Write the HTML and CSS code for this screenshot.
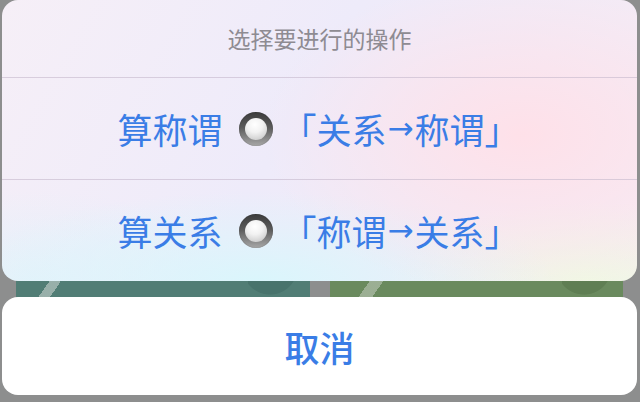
FILE: index.html
```html
<!DOCTYPE html>
<html lang="zh-CN">
<head>
<meta charset="utf-8">
<title>选择要进行的操作</title>
<link rel="stylesheet" href="styles.css">
</head>
<body>
<div class="screen">
  <div class="sheet">
    <div class="title">选择要进行的操作</div>
    <div class="row">
      <span class="label">算称谓</span>
      <span class="radio"><span class="radio-dot"></span></span>
      <span class="label">「关系<span class="arrow">→</span>称谓」</span>
    </div>
    <div class="row last">
      <span class="label">算关系</span>
      <span class="radio"><span class="radio-dot"></span></span>
      <span class="label">「称谓<span class="arrow">→</span>关系」</span>
    </div>
  </div>
  <div class="peek">
    <div class="card teal"></div>
    <div class="card green"></div>
  </div>
  <div class="cancel">取消</div>
</div>
</body>
</html>
```

FILE: styles.css
```css
* { box-sizing: border-box; }
html, body {
  margin: 0;
  padding: 0;
}
body {
  width: 640px;
  height: 402px;
  overflow: hidden;
  background: #8d8e8e;
  font-family: "Noto Sans CJK SC", "Noto Sans", sans-serif;
}
.screen {
  display: flex;
  flex-direction: column;
  width: 640px;
  height: 402px;
}
.sheet {
  margin: 0 3px 0 2px;
  height: 281px;
  border-radius: 16px;
  overflow: hidden;
  display: flex;
  flex-direction: column;
  background:
    radial-gradient(ellipse 260px 160px at 82% 48%, rgba(255, 224, 232, 0.95), rgba(255, 224, 232, 0) 100%),
    radial-gradient(ellipse 300px 90px at 40% 100%, rgba(218, 246, 252, 1), rgba(218, 246, 252, 0) 100%),
    radial-gradient(ellipse 200px 80px at 92% 100%, rgba(240, 248, 228, 1), rgba(240, 248, 228, 0) 100%),
    radial-gradient(ellipse 200px 90px at 5% 100%, rgba(228, 242, 250, 1), rgba(228, 242, 250, 0) 100%),
    linear-gradient(120deg, #f6eff7 0%, #eeebfa 45%, #f6ebf4 100%);
}
.title {
  height: 78px;
  border-bottom: 1px solid rgba(196, 184, 204, 0.6);
  display: flex;
  align-items: center;
  justify-content: center;
  font-size: 23px;
  color: #8e8b92;
  padding-bottom: 1px;
}
.row {
  height: 102px;
  border-bottom: 1px solid rgba(196, 184, 204, 0.6);
  display: flex;
  align-items: center;
  justify-content: center;
  font-size: 35px;
  color: #3a7de6;
  padding-right: 2px;
}
.row.last {
  border-bottom: none;
  height: 101px;
}
.label {
  display: inline-flex;
  align-items: center;
  line-height: 1;
}
.arrow {
  display: inline-block;
  font-family: "DejaVu Sans", sans-serif;
  font-size: 31px;
  margin: 0 1px;
  line-height: 1;
}
.radio {
  width: 34px;
  height: 34px;
  border-radius: 50%;
  margin: 0 9px 0 16px;
  background: linear-gradient(180deg, #3c3c3c 0%, #5a5a5a 45%, #a8a8a8 100%);
  display: flex;
  align-items: center;
  justify-content: center;
  box-shadow: inset 0 0 1px rgba(0,0,0,0.5);
}
.radio-dot {
  width: 22px;
  height: 22px;
  border-radius: 50%;
  background: radial-gradient(circle at 45% 30%, #ffffff 0%, #f2f2f2 40%, #bdbdbd 100%);
}
.peek {
  height: 16px;
  display: flex;
  gap: 20px;
  padding: 0 17px 0 16px;
}
.card {
  flex: 1;
}
.teal {
  background-color: #517d75;
  background-image:
    linear-gradient(125deg, rgba(0,0,0,0) 35%, rgba(170, 188, 183, 0.8) 35%, rgba(170, 188, 183, 0.8) 70%, rgba(0,0,0,0) 70%),
    radial-gradient(circle 28px at 22px -14px, #48736c 97%, rgba(0,0,0,0) 100%);
  background-size: 22px 16px, 60px 16px;
  background-position: 22px 0, 232px 0;
  background-repeat: no-repeat;
}
.green {
  background-color: #6a8a5e;
  background-image:
    linear-gradient(125deg, rgba(0,0,0,0) 35%, rgba(176, 190, 170, 0.7) 35%, rgba(176, 190, 170, 0.7) 70%, rgba(0,0,0,0) 70%),
    radial-gradient(circle 28px at 22px -14px, #5f7e53 97%, rgba(0,0,0,0) 100%);
  background-size: 28px 16px, 60px 16px;
  background-position: 26px 0, 232px 0;
  background-repeat: no-repeat;
}
.cancel {
  margin: 0 3px 0 2px;
  height: 98px;
  border-radius: 16px;
  background: #ffffff;
  display: flex;
  align-items: center;
  justify-content: center;
  font-size: 35px;
  font-weight: 500;
  color: #3a7de6;
}
```
